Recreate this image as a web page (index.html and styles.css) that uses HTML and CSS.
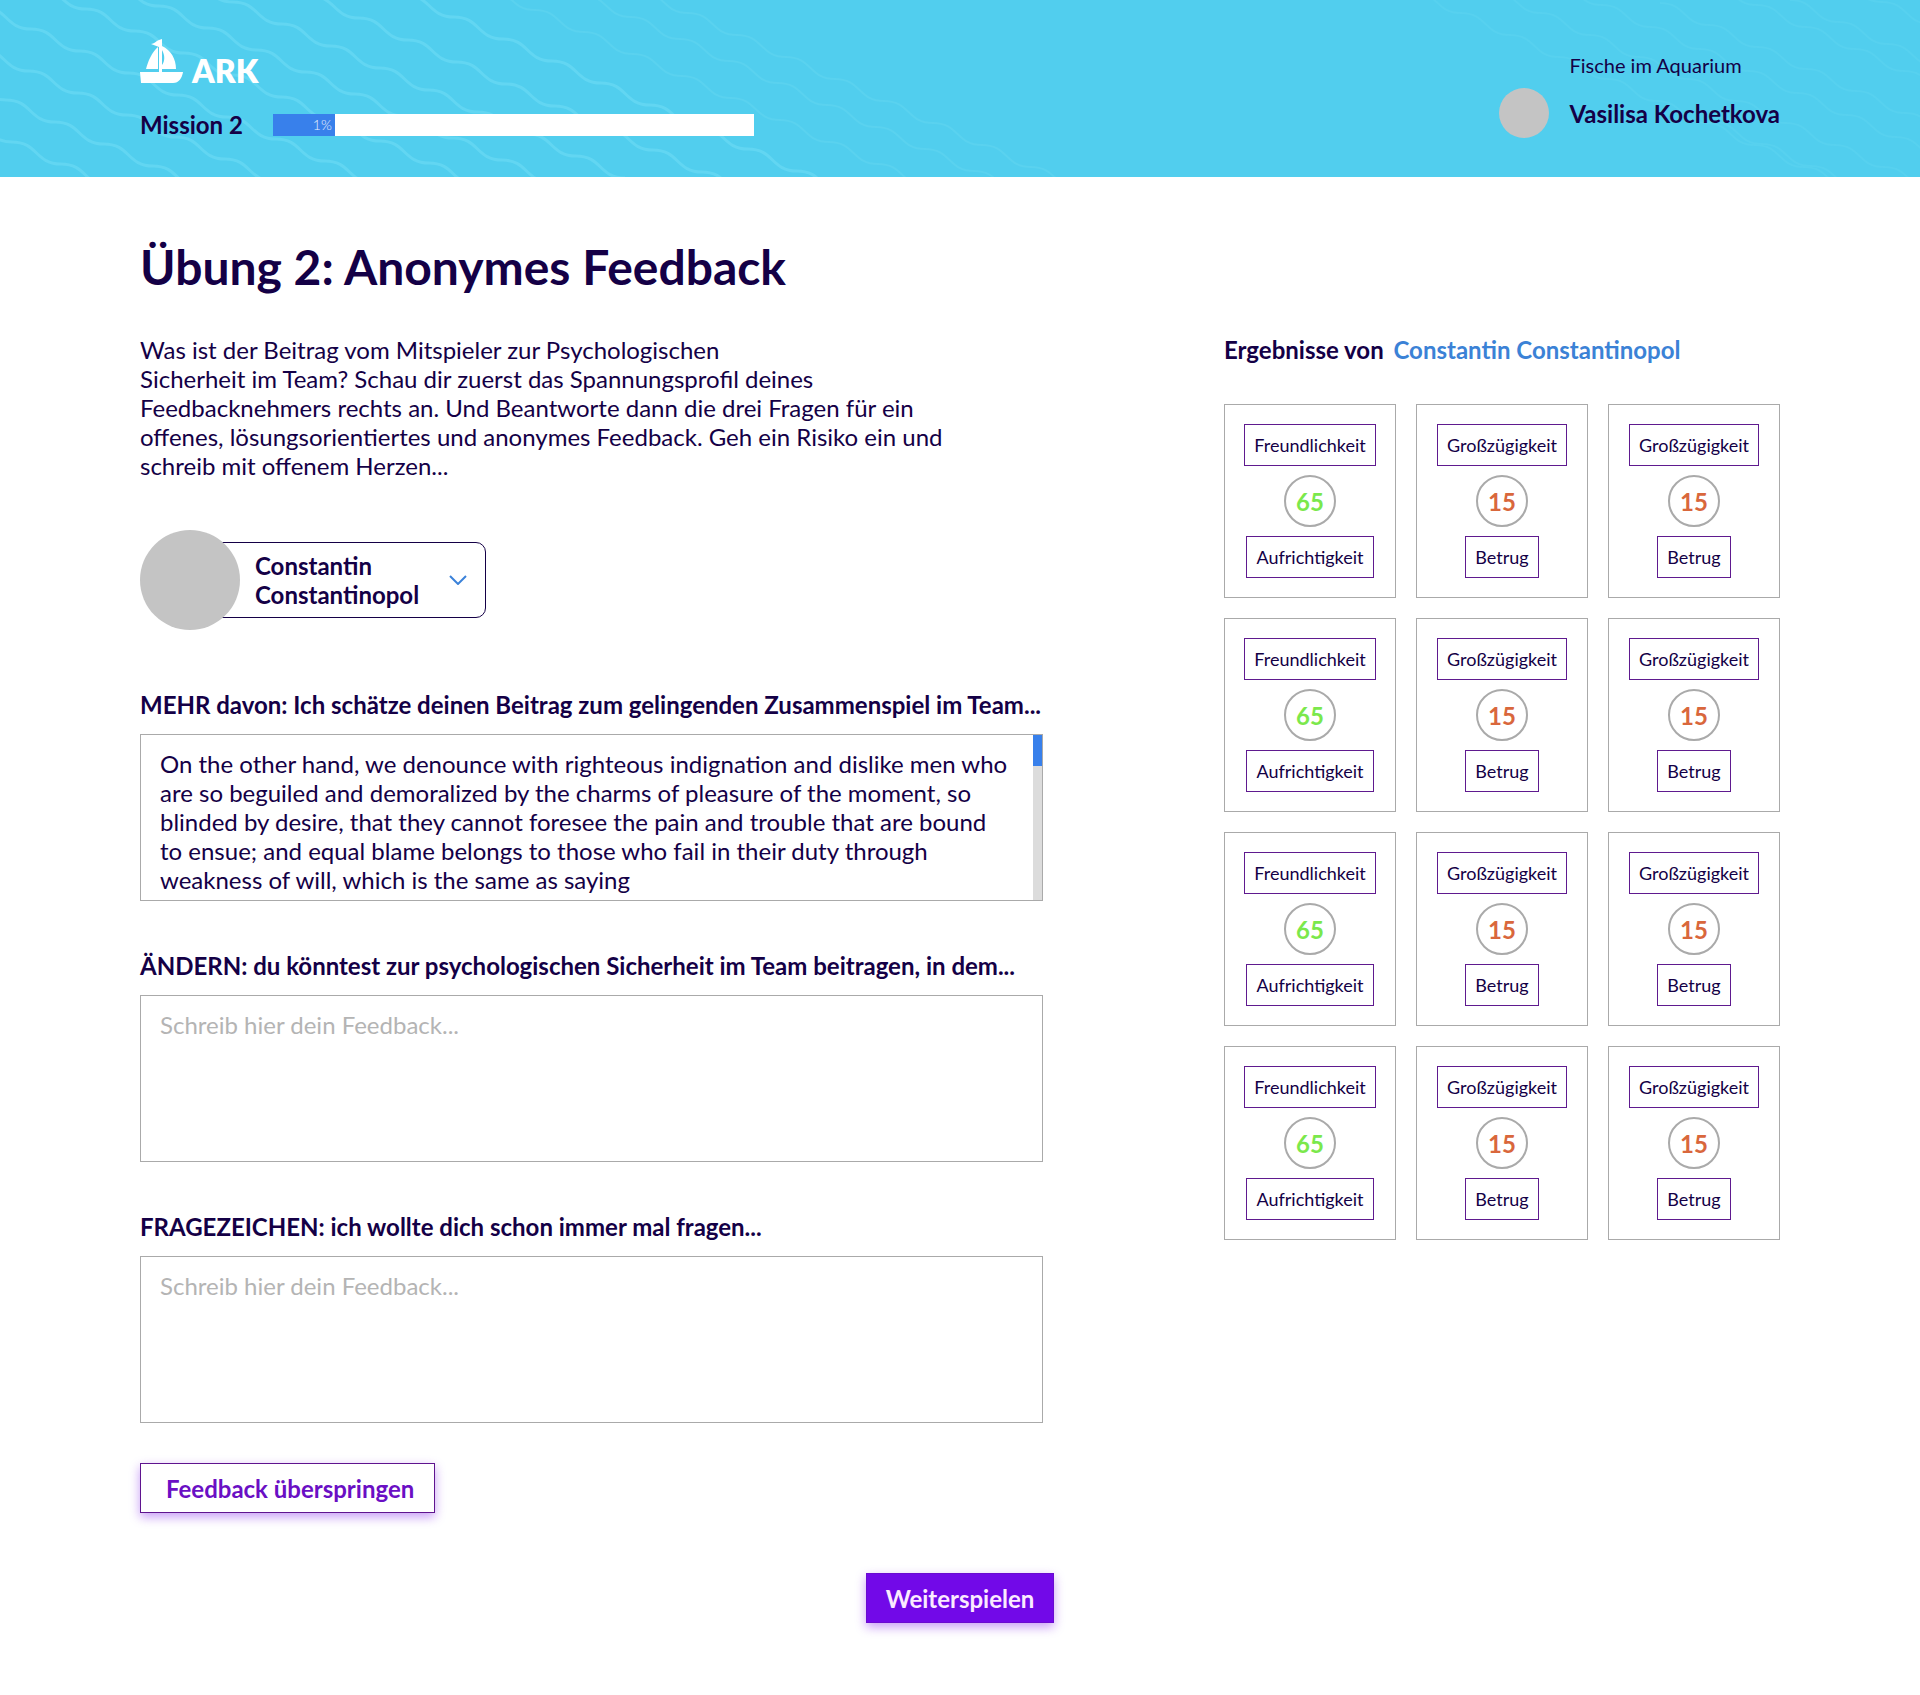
FILE: index.html
```html
<!DOCTYPE html>
<html lang="de">
<head>
<meta charset="utf-8">
<meta name="viewport" content="width=device-width, initial-scale=1">
<title>ARK – Anonymes Feedback</title>
<link rel="stylesheet" href="styles.css">
</head>
<body>
<header class="header">
  <svg class="waves waves-left" width="1080" height="177" viewBox="0 0 1080 177" aria-hidden="true">
    <defs>
      <path id="wave" d="M0 0c26 0 23 22 49 22s23 22 49 22s23 22 49 22s23 22 49 22s23 22 49 22s23 22 49 22s23 22 49 22s23 22 49 22s23 22 49 22"/>
    </defs>
    <g class="wave-strong">
      <use href="#wave" x="-37" y="120"/>
      <use href="#wave" x="-43" y="78"/>
      <use href="#wave" x="-20" y="49"/>
      <use href="#wave" x="-18" y="7"/>
      <use href="#wave" x="37" y="-13"/>
      <use href="#wave" x="110" y="-16"/>
      <use href="#wave" x="184" y="-20"/>
      <use href="#wave" x="310" y="-4"/>
      <use href="#wave" x="405" y="-5"/>
    </g>
    <g class="wave-faint">
      <use href="#wave" x="486" y="-12"/>
      <use href="#wave" x="582" y="-5"/>
      <use href="#wave" x="639" y="-9"/>
    </g>
  </svg>
  <svg class="waves waves-right" width="520" height="177" viewBox="1400 0 520 177" aria-hidden="true">
    <g class="wave-pale">
      <use href="#wave" x="1412" y="-9"/>
      <use href="#wave" x="1492" y="-9"/>
      <use href="#wave" x="1553" y="-17"/>
      <use href="#wave" x="1660" y="3"/>
      <use href="#wave" x="1708" y="-17"/>
      <use href="#wave" x="1790" y="0"/>
      <use href="#wave" x="1833" y="-20"/>
      <use href="#wave" x="1713" y="122"/>
    </g>
  </svg>
  <div class="header-main">
    <a class="logo" href="#">
      <svg width="43" height="46" viewBox="0 0 43 46" fill="#fff" aria-hidden="true">
        <path d="M0 34h43c-1 6-4 11-10 11H1z"/>
        <path d="M18 9v22H6C8 23 12 14 18 9z"/>
        <path d="M22 8c9 4 14 13 14 23H22v-4c3-4 3-10 0-15z"/>
        <path d="M19 2l3-1v34h-3V9L11 6c3 0 5-3 8-4z"/>
      </svg>
      <span>ARK</span>
    </a>
    <div class="mission">
      <span class="mission-name">Mission 2</span>
      <div class="progress" role="progressbar" aria-label="Mission 2" aria-valuenow="1" aria-valuemin="0" aria-valuemax="100">
        <div class="progress-fill">1%</div>
      </div>
    </div>
  </div>
  <div class="user">
    <span class="team">Fische im Aquarium</span>
    <span class="user-avatar"></span>
    <span class="user-name">Vasilisa Kochetkova</span>
  </div>
</header>

<main class="page">
  <h1>Übung 2: Anonymes Feedback</h1>
  <div class="columns">
    <form class="feedback" id="feedback">
      <p class="intro">Was ist der Beitrag vom Mitspieler zur Psychologischen<br>Sicherheit im Team? Schau dir zuerst das Spannungsprofil deines Feedbacknehmers rechts an. Und Beantworte dann die drei Fragen für ein offenes, lösungsorientiertes und anonymes Feedback. Geh ein Risiko ein und schreib mit offenem Herzen...</p>
      <div class="player">
        <span class="player-avatar"></span>
        <select class="player-select" aria-label="Mitspieler">
          <button><selectedcontent></selectedcontent></button>
          <option selected>Constantin Constantinopol</option>
        </select>
        <svg class="player-chevron" width="18" height="10" viewBox="0 0 18 10" aria-hidden="true"><path d="M1 1l8 8 8-8" fill="none" stroke="#3b82d9" stroke-width="2"/></svg>
      </div>
      <div class="field">
        <label for="more">MEHR davon: Ich schätze deinen Beitrag zum gelingenden Zusammenspiel im Team...</label>
        <div class="textbox">
          <textarea id="more">On the other hand, we denounce with righteous indignation and dislike men who are so beguiled and demoralized by the charms of pleasure of the moment, so blinded by desire, that they cannot foresee the pain and trouble that are bound to ensue; and equal blame belongs to those who fail in their duty through weakness of will, which is the same as saying</textarea>
          <div class="scrollbar"><div class="scroll-thumb"></div></div>
        </div>
      </div>
      <div class="field">
        <label for="change">ÄNDERN: du könntest zur psychologischen Sicherheit im Team beitragen, in dem...</label>
        <div class="textbox"><textarea id="change" placeholder="Schreib hier dein Feedback..."></textarea></div>
      </div>
      <div class="field">
        <label for="question">FRAGEZEICHEN: ich wollte dich schon immer mal fragen...</label>
        <div class="textbox"><textarea id="question" placeholder="Schreib hier dein Feedback..."></textarea></div>
      </div>
      <button class="button button-outline" type="button">Feedback überspringen</button>
    </form>

    <section class="results">
      <h2>Ergebnisse von <a href="#">Constantin Constantinopol</a></h2>
      <div class="cards">
        <div class="card"><span class="tag">Freundlichkeit</span><span class="score high">65</span><span class="tag">Aufrichtigkeit</span></div>
        <div class="card"><span class="tag">Großzügigkeit</span><span class="score low">15</span><span class="tag">Betrug</span></div>
        <div class="card"><span class="tag">Großzügigkeit</span><span class="score low">15</span><span class="tag">Betrug</span></div>
        <div class="card"><span class="tag">Freundlichkeit</span><span class="score high">65</span><span class="tag">Aufrichtigkeit</span></div>
        <div class="card"><span class="tag">Großzügigkeit</span><span class="score low">15</span><span class="tag">Betrug</span></div>
        <div class="card"><span class="tag">Großzügigkeit</span><span class="score low">15</span><span class="tag">Betrug</span></div>
        <div class="card"><span class="tag">Freundlichkeit</span><span class="score high">65</span><span class="tag">Aufrichtigkeit</span></div>
        <div class="card"><span class="tag">Großzügigkeit</span><span class="score low">15</span><span class="tag">Betrug</span></div>
        <div class="card"><span class="tag">Großzügigkeit</span><span class="score low">15</span><span class="tag">Betrug</span></div>
        <div class="card"><span class="tag">Freundlichkeit</span><span class="score high">65</span><span class="tag">Aufrichtigkeit</span></div>
        <div class="card"><span class="tag">Großzügigkeit</span><span class="score low">15</span><span class="tag">Betrug</span></div>
        <div class="card"><span class="tag">Großzügigkeit</span><span class="score low">15</span><span class="tag">Betrug</span></div>
      </div>
    </section>
  </div>
  <button class="button button-primary" type="submit" form="feedback">Weiterspielen</button>
</main>
</body>
</html>
```
FILE: styles.css
```css
* { box-sizing: border-box; }

body {
  margin: 0;
  background: #fff;
  color: #140046;
  font: 400 24px/29px Lato, "Open Sans", sans-serif;
}

button, textarea, select { font: inherit; color: inherit; }

/* Header */
.header {
  position: relative;
  display: flex;
  justify-content: space-between;
  align-items: flex-start;
  padding: 38px 140px;
  overflow: hidden;
  background: #51ceee;
}
.waves { position: absolute; top: 0; fill: none; }
.waves-left { left: 0; }
.waves-right { right: 0; }
.wave-strong { stroke: #62d6f2; stroke-width: 3; }
.wave-faint { stroke: #5ad2ef; stroke-width: 2; }
.wave-pale { stroke: #57d1ef; stroke-width: 2; }

.header-main { position: relative; }
.logo {
  display: flex;
  align-items: flex-end;
  gap: 9px;
  width: max-content;
  height: 46px;
  color: #fff;
  font-size: 32px;
  line-height: 38px;
  font-weight: 800;
  text-decoration: none;
}
.logo span { height: 32px; }
.mission { display: flex; align-items: center; gap: 30px; margin-top: 26px; }
.mission-name { font-weight: 700; }
.progress { width: 481px; height: 22px; background: #fff; }
.progress-fill {
  width: 62px;
  height: 22px;
  padding-right: 3px;
  background: #3880eb;
  color: #e6eefc;
  font-size: 14px;
  line-height: 22px;
  font-weight: 300;
  text-align: right;
}
.user {
  position: relative;
  display: grid;
  grid-template-columns: 50px auto;
  column-gap: 20px;
  align-items: center;
  margin-top: 14px;
}
.team { grid-column: 2; height: 36px; font-size: 20px; line-height: 26px; }
.user-avatar { width: 50px; height: 50px; border-radius: 50%; background: #c4c4c4; }
.user-name { font-weight: 700; }

/* Page */
.page { padding: 61px 140px 72px; }
h1 { margin: 0 0 39px; font-size: 48px; line-height: 58px; font-weight: 700; }
.columns {
  display: grid;
  grid-template-columns: minmax(0, 903px) 556px;
  justify-content: space-between;
  gap: 40px;
  align-items: start;
}
.intro { max-width: 820px; margin: 0; }

.player { position: relative; display: flex; align-items: center; width: 346px; height: 100px; margin: 50px 0 60px; }
.player-avatar { position: absolute; left: 0; width: 100px; height: 100px; border-radius: 50%; background: #c4c4c4; pointer-events: none; }
.player-select {
  appearance: none;
  appearance: base-select;
  width: 100%;
  height: 76px;
  margin-left: 50px;
  padding: 8px 60px 8px 64px;
  border: 1px solid #140046;
  border-radius: 10px;
  background: #fff;
  font-weight: 700;
  line-height: 29px;
  white-space: normal;
  text-align: left;
}
.player-select::picker-icon { display: none; }
.player-chevron { position: absolute; right: 19px; pointer-events: none; }

.field { display: flex; flex-direction: column; gap: 15px; margin-bottom: 50px; }
.field:last-of-type { margin-bottom: 40px; }
.field label { font-weight: 700; }
.textbox { display: flex; height: 167px; border: 1px solid #aaa; }
.textbox textarea {
  flex: 1;
  min-width: 0;
  padding: 14px 19px 0;
  border: 0;
  outline: 0;
  background: none;
  resize: none;
  overflow: hidden;
}
.textbox textarea::placeholder { color: #b4b4b4; opacity: 1; }
.scrollbar { width: 9px; background: #dcdcdc; }
.scroll-thumb { height: 31px; background: #3880eb; }

.button {
  height: 50px;
  padding: 0 19px;
  border: 1px solid #5f148f;
  font-weight: 700;
  box-shadow: 0 4px 10px rgba(114, 9, 232, .4);
}
.button-outline { padding: 0 20px 0 25px; background: #fff; color: #6a0fc4; }
.button-primary { display: block; margin: 60px auto 0; border-color: #6a0bd0; background: #7209e8; color: #fbeaff; }

/* Results */
.results h2 { margin: 0 0 40px; font-size: 24px; line-height: 29px; font-weight: 700; }
.results h2 a { margin-left: 4px; color: #3b82d6; text-decoration: none; }
.cards { display: grid; grid-template-columns: repeat(3, 1fr); gap: 20px; }
.card {
  display: flex;
  flex-direction: column;
  align-items: center;
  gap: 9px;
  padding: 19px 0;
  border: 1px solid #aaa;
}
.tag { padding: 9px; border: 1px solid #5f1a8f; font-size: 18px; line-height: 22px; }
.score {
  width: 52px;
  height: 52px;
  border: 2px solid #aaa;
  border-radius: 50%;
  line-height: 50px;
  font-weight: 700;
  text-align: center;
}
.high { color: #7be84c; }
.low { color: #d9673c; }
```
